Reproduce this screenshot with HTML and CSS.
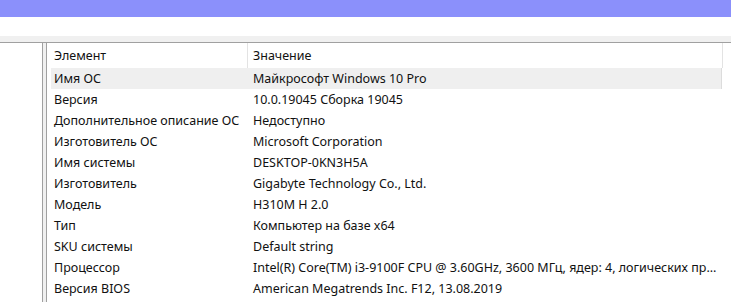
FILE: index.html
```html
<!DOCTYPE html>
<html>
<head>
  <title>Сведения о системе</title>
  <link rel="stylesheet" href="styles.css">
</head>
<body>

  <div class="titlebar"></div>
  <div class="menubar"></div>
  <div class="strip"></div>

  <div class="panes">
    <div class="tree"></div>
    <div class="details">
      <div class="header">
        <div class="col name">Элемент</div>
        <div class="col value">Значение</div>
      </div>
      <div class="row selected">
        <div class="col name">Имя ОС</div>
        <div class="col value">Майкрософт Windows 10 Pro</div>
      </div>
      <div class="row">
        <div class="col name">Версия</div>
        <div class="col value">10.0.19045 Сборка 19045</div>
      </div>
      <div class="row">
        <div class="col name">Дополнительное описание ОС</div>
        <div class="col value">Недоступно</div>
      </div>
      <div class="row">
        <div class="col name">Изготовитель ОС</div>
        <div class="col value">Microsoft Corporation</div>
      </div>
      <div class="row">
        <div class="col name">Имя системы</div>
        <div class="col value">DESKTOP-0KN3H5A</div>
      </div>
      <div class="row">
        <div class="col name">Изготовитель</div>
        <div class="col value">Gigabyte Technology Co., Ltd.</div>
      </div>
      <div class="row">
        <div class="col name">Модель</div>
        <div class="col value">H310M H 2.0</div>
      </div>
      <div class="row">
        <div class="col name">Тип</div>
        <div class="col value">Компьютер на базе x64</div>
      </div>
      <div class="row">
        <div class="col name">SKU системы</div>
        <div class="col value">Default string</div>
      </div>
      <div class="row">
        <div class="col name">Процессор</div>
        <div class="col value">Intel(R) Core(TM) i3-9100F CPU @ 3.60GHz, 3600 МГц, ядер: 4, логических пр...</div>
      </div>
      <div class="row">
        <div class="col name">Версия BIOS</div>
        <div class="col value">American Megatrends Inc. F12, 13.08.2019</div>
      </div>
    </div>
  </div>

</body>
</html>
```

FILE: styles.css
```css
body {
  margin: 0;
  font-family: 'Noto Sans', sans-serif;
  font-size: 12.5px;
  color: #111;
  background-color: white;
  overflow: hidden;
}

.titlebar {
  height: 17px;
  background-color: #8b90fb;
}

.menubar {
  height: 19px;
  background-color: white;
}

.strip {
  height: 6px;
  background-color: #f0f0f0;
}

.panes {
  display: flex;
  gap: 3px;
  height: 260px;
  border-top: 1px solid #a0a0a0;
  background-color: #f0f0f0;
}

.tree {
  width: 42px;
  background-color: white;
  border-right: 1px solid #a0a0a0;
}

.details {
  flex: 1;
  background-color: white;
  border-left: 1px solid #a0a0a0;
  padding-left: 4px;
}

.header,
.row {
  display: flex;
  width: 671px;
  white-space: nowrap;
}

.header {
  height: 25px;
  line-height: 25px;
  border-right: 1px solid #e3e3e3;
}

.row {
  height: 21px;
  line-height: 21px;
}

.row.selected {
  background-color: #efefef;
  border-right: 1px solid #dcdcdc;
  width: 670px;
}

.col.name {
  width: 193px;
  padding-left: 3px;
  flex-shrink: 0;
}

.header .col.name {
  border-right: 1px solid #e3e3e3;
}

.col.value {
  flex: 1;
  min-width: 0;
  padding-left: 6px;
}

.header .col.value {
  padding-left: 5px;
}
```
